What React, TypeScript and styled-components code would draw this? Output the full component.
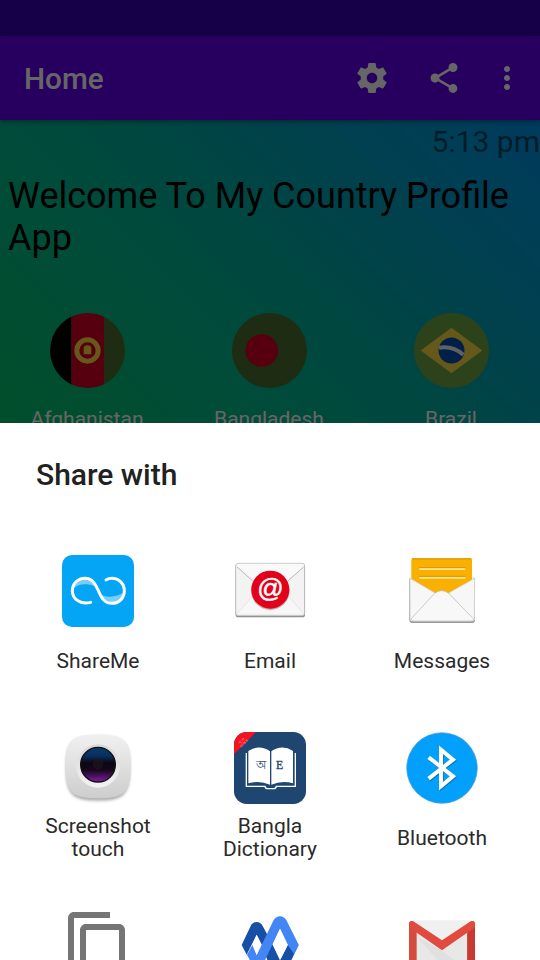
import React from "react";
import styled, { createGlobalStyle } from "styled-components";

const GlobalStyle = createGlobalStyle`
  * { box-sizing: border-box; }
  body { margin: 0; background: #fff; font-family: Roboto, sans-serif; }
  svg { display: block; }
`;

const Screen = styled.div`
  position: relative;
  width: 540px;
  height: 960px;
  overflow: hidden;
  display: flex;
  flex-direction: column;
`;

const StatusBar = styled.div`
  flex: none;
  height: 36px;
  background: #3700b3;
`;

const AppBar = styled.header`
  flex: none;
  position: relative;
  display: flex;
  align-items: center;
  height: 84px;
  padding: 0 15px 0 24px;
  background: #6200ee;
  color: #fff;
  box-shadow: 0 1px 5px rgba(0, 0, 0, 0.45);
`;

const AppTitle = styled.h1`
  flex: 1;
  margin: 0;
  padding-top: 2px;
  font-size: 29.7px;
  font-weight: 500;
  line-height: 36px;
`;

const Actions = styled.div`
  display: flex;
  align-items: center;
  gap: 36px;
`;

const Action = styled.svg<{ $last?: boolean }>`
  width: 36px;
  height: 36px;
  margin-left: ${(p) => (p.$last ? "-9px" : "0")};
  fill: #fff;
`;

const HomePage = styled.main`
  flex: 1;
  display: flex;
  flex-direction: column;
  background: linear-gradient(
    45deg,
    #00c853 0%,
    #00c469 39%,
    #00bc91 60%,
    #00b2a0 70%,
    #00a6b7 79%,
    #009ed0 89%,
    #0092e8 100%
  );
`;

const Clock = styled.div`
  height: 44px;
  line-height: 44px;
  text-align: right;
  font-size: 30px;
  color: rgba(0, 0, 0, 0.54);
`;

const Welcome = styled.h2`
  margin: 11px 0 0 8px;
  font-size: 36px;
  font-weight: 400;
  line-height: 42px;
  color: #000;
`;

const Countries = styled.div`
  display: grid;
  grid-template-columns: repeat(3, 182px);
  margin: 54px 0 0 -4px;
`;

const Country = styled.div`
  display: flex;
  flex-direction: column;
  align-items: center;
  gap: 19px;
  font-size: 21px;
  line-height: 25px;
  color: #fff;
`;

const Flag = styled.svg`
  width: 75px;
  height: 75px;
`;

const Overlay = styled.div`
  position: absolute;
  inset: 0;
  display: flex;
  flex-direction: column;
  justify-content: flex-end;
  background: rgba(0, 0, 0, 0.6);
`;

const Sheet = styled.section`
  height: 537px;
  overflow: hidden;
  background: #fff;
`;

const SheetTitle = styled.h3`
  margin: 0;
  padding: 34px 36px 0;
  height: 132px;
  font-size: 30px;
  line-height: 36px;
  font-weight: 500;
  color: #212121;
`;

const TargetGrid = styled.div`
  display: grid;
  grid-template-columns: repeat(3, 172px);
  grid-auto-rows: 177px;
  padding: 0 12px;
`;

const Target = styled.div`
  display: flex;
  flex-direction: column;
  align-items: center;
  gap: 8px;
`;

const TargetIcon = styled.svg`
  flex: none;
  width: 72px;
  height: 72px;
`;

const TargetLabel = styled.div`
  display: flex;
  align-items: center;
  height: 52px;
  width: 130px;
  justify-content: center;
  text-align: center;
  font-size: 21px;
  line-height: 23px;
  color: #2a2a2a;
`;

const AfghanistanFlag = () => (
  <Flag viewBox="60 39 225 225">
    <clipPath id="afg"><circle cx="172.5" cy="151.5" r="112.5" /></clipPath>
    <g clipPath="url(#afg)">
      <rect x="60" y="39" width="65" height="225" fill="#000" />
      <rect x="124" y="39" width="98" height="225" fill="#d80027" />
      <rect x="222" y="39" width="64" height="225" fill="#496e2d" />
    </g>
    <circle cx="172.5" cy="151.5" r="32" fill="none" stroke="#ffda44" strokeWidth="15" />
    <path d="M161 163v-17q0-10 11.5-10t11.5 10v17z" fill="#ffda44" />
  </Flag>
);

const BangladeshFlag = () => (
  <Flag viewBox="66 39 225 225">
    <circle cx="178.5" cy="151.5" r="112.5" fill="#496e2d" />
    <circle cx="155" cy="151.5" r="49" fill="#d80027" />
  </Flag>
);

const BrazilFlag = () => (
  <Flag viewBox="72 39 225 225">
    <circle cx="184.5" cy="151.5" r="112.5" fill="#6da544" />
    <path d="M184.5 83 277 151.5 184.5 220 92 151.5z" fill="#ffda44" />
    <circle cx="184.5" cy="151.5" r="39" fill="#0052b4" />
    <path d="M147 143q41-7 73 21" fill="none" stroke="#f0f0f0" strokeWidth="12" />
  </Flag>
);

const ShareMeIcon = () => (
  <TargetIcon viewBox="96 45 216 216">
    <rect x="96" y="45" width="216" height="216" rx="30" fill="#03a5f4" />
    <path d="M129 148C142 133 166 128 196 139C187 120 178 116 164 116C146 116 131 130 129 148z" fill="#7accf9" />
    <path d="M209 160C222 174 252 174 281 158C277 178 263 190 246 190C226 190 216 176 209 160z" fill="#7accf9" />
    <path
      d="M182 187C153 195 127 178 127 152C127 130 144 115 165 115C187 115 196 132 205 152C214 173 222 190 246 190C268 190 283 173 283 152C283 131 267 115 245 115C238 115 233 117 228 120"
      fill="none" stroke="#fff" strokeWidth="9" strokeLinecap="round" />
  </TargetIcon>
);

const EmailIcon = () => (
  <TargetIcon viewBox="72 45 216 216">
    <rect x="77" y="72" width="208" height="160" rx="8" fill="#8d8d8d" />
    <rect x="77" y="70" width="207" height="157" rx="8" fill="#f3f3f3" stroke="#b5b5b5" strokeWidth="2.5" />
    <path d="M80 222 145 150h74l63 72q-2 3-6 3H86q-4 0-6-3z" fill="#f7f7f7" stroke="#dcdcdc" strokeWidth="2" />
    <path d="M79 76 160 149q21 14 42 0L283 76q-2-5-8-5H87q-6 0-8 5z" fill="#f9f9f9" />
    <path d="M81 81 160 151M281 81l-79 70" stroke="#b9b9b9" strokeWidth="3" />
    <circle cx="181" cy="152" r="58" fill="#bdb3b3" />
    <circle cx="181" cy="149" r="57" fill="#e2001a" />
    <text x="181" y="170" textAnchor="middle" fontFamily="Liberation Sans, sans-serif" fontSize="78" fill="#fff" stroke="#fff" strokeWidth="1.5">@</text>
  </TargetIcon>
);

const MessagesIcon = () => (
  <TargetIcon viewBox="78 45 216 216">
    <path d="M88 119q0-8 8-5H278q8-3 7 5V240q0 9-9 9H97q-9 0-9-9z" fill="#999" />
    <rect x="90" y="114" width="193" height="130" rx="6" fill="#f1f1f1" />
    <path d="M94 60q0-5 5-5H271q5 0 5 5V125L212 162H158L94 125z" fill="#f9b000" />
    <path d="M96 56.5H274" stroke="#cf9300" strokeWidth="3" />
    <path d="M118 87H256M118 113H256" stroke="#ffe58f" strokeWidth="6" />
    <path d="M118 83H256M118 109H256" stroke="#dc9700" strokeWidth="3" />
    <path d="M90 115 165 159 91 240zM284 115 206 159 283 240z" fill="#f7f7f7" stroke="#cfcfcf" strokeWidth="2" />
    <path d="M93 237 163 161q22-18 44 0L281 237q-2 6-8 6H101q-6 0-8-6z" fill="#f8f8f8" stroke="#c9c9c9" strokeWidth="2.5" />
  </TargetIcon>
);

const ScreenshotIcon = () => (
  <TargetIcon viewBox="96 36 216 216">
    <defs>
      <linearGradient id="body" x1="0" y1="0" x2="0" y2="1">
        <stop offset="0" stopColor="#f1f1f1" /><stop offset="1" stopColor="#cdcdcd" />
      </linearGradient>
      <linearGradient id="rim" x1="0" y1="0" x2="0" y2="1">
        <stop offset="0" stopColor="#d8d8d8" /><stop offset="1" stopColor="#f2f2f2" />
      </linearGradient>
      <linearGradient id="lens" x1="0" y1="0" x2="0" y2="1">
        <stop offset="0" stopColor="#063c70" /><stop offset=".25" stopColor="#082f5d" />
        <stop offset=".45" stopColor="#0b0711" /><stop offset=".65" stopColor="#150719" />
        <stop offset=".82" stopColor="#46105f" /><stop offset="1" stopColor="#8b1ba5" />
      </linearGradient>
      <filter id="soft"><feGaussianBlur stdDeviation="4" /></filter>
    </defs>
    <path d="M204 50C280 50 300 62 300 144S280 242 204 242 108 226 108 144 128 50 204 50z" fill="#aaa" filter="url(#soft)" />
    <path d="M204 43C284 43 302 61 302 139S284 235 204 235 106 217 106 139 124 43 204 43z" fill="url(#body)" />
    <circle cx="204" cy="138" r="65" fill="url(#rim)" />
    <circle cx="204" cy="134" r="52" fill="url(#lens)" stroke="#111" strokeWidth="4" />
    <circle cx="204" cy="133" r="16" fill="#1d1620" opacity=".7" />
  </TargetIcon>
);

const DictionaryIcon = () => (
  <TargetIcon viewBox="72 36 216 216">
    <clipPath id="tile"><rect x="72" y="36" width="216" height="216" rx="38" /></clipPath>
    <g clipPath="url(#tile)">
      <rect x="72" y="36" width="216" height="216" fill="#1e4670" />
      <path d="M72 36h66L72 103z" fill="#f5111d" />
    </g>
    <g transform="rotate(-45 98 66)" fill="#ffb9b9" fontFamily="Roboto, sans-serif" fontSize="10">
      <text x="98" y="64" textAnchor="middle">বাংলা</text>
      <text x="98" y="75" textAnchor="middle">অভিধান</text>
    </g>
    <path d="M109 99V199H165q1 7 8 7h18q7 0 8-7h57V99" fill="none" stroke="#fff" strokeWidth="4" />
    <path d="M115 93Q148 72 180 94V194Q148 180 115 190z" fill="#fff" />
    <path d="M184 94Q216 72 249 93V190Q216 180 184 194z" fill="#fff" />
    <text x="152" y="146" textAnchor="middle" fontFamily="Liberation Serif, serif" fontSize="36" fontWeight="400" fill="#1e4670">অ</text>
    <text x="209" y="146" textAnchor="middle" fontFamily="Liberation Serif, serif" fontSize="35" fill="#1e4670" stroke="#1e4670">E</text>
  </TargetIcon>
);

const BluetoothIcon = () => (
  <TargetIcon viewBox="78 36 216 216">
    <circle cx="186" cy="144" r="106" fill="#03a0fb" stroke="#5d9fc9" strokeWidth="2" />
    <path d="M146 112 219 169 183 199V89L219 119 146 176" transform="translate(2 3)" fill="none" stroke="#0874b5" strokeWidth="12" />
    <path d="M146 112 219 169 183 199V89L219 119 146 176" fill="none" stroke="#fff" strokeWidth="12" />
  </TargetIcon>
);

const CopyIcon = () => (
  <TargetIcon viewBox="0 0 24 24">
    <path fill="#757575" d="M16 1H4c-1.1 0-2 .9-2 2v14h2V3h12V1zm3 4H8c-1.1 0-2 .9-2 2v14c0 1.1.9 2 2 2h11c1.1 0 2-.9 2-2V7c0-1.1-.9-2-2-2zm0 16H8V7h11v14z" />
  </TargetIcon>
);

const RibbonIcon = () => (
  <TargetIcon viewBox="582 57 216 216">
    <path d="M605 165 632 108C639 92 661 92 668 108L725 214 695 240 650 134 620 194z" fill="#174ea6" />
    <path d="M776 164 740 240 718 215 744 164z" fill="#174ea6" />
    <path d="M637 165 650 134 666 165 650 196z" fill="#fff" />
    <path d="M621 194 637 165 650 196 700 92C708 74 732 74 740 92L776 164 762 192 743 164 720 116 661 240H645z" fill="#4285f4" />
    <path d="M698 164 720 116 743 164 720 211z" fill="#fff" />
  </TargetIcon>
);

const GmailIcon = () => (
  <TargetIcon viewBox="1098 57 216 216">
    <path d="M1117 91H1295V240H1117z" fill="#f0f0f0" />
    <path d="M1128 130 1206 180 1284 130V240H1128z" fill="#e8e8e8" />
    <path d="M1130 140 1206 182 1284 240H1220z" fill="#e0e0e0" />
    <path d="M1107 102Q1107 93 1117 93L1130 102V240H1107zM1305 102Q1305 93 1295 93L1282 102V240H1305z" fill="#d54b3d" />
    <path d="M1282 128 1305 110V240H1282z" fill="#c63a2f" />
    <path d="M1107 104Q1107 88 1122 95L1206 151 1290 95Q1305 88 1305 104 1305 111 1298 117L1206 181 1114 117Q1107 111 1107 104z" fill="#e04a3f" />
  </TargetIcon>
);

const countries = [
  { name: "Afghanistan", Icon: AfghanistanFlag },
  { name: "Bangladesh", Icon: BangladeshFlag },
  { name: "Brazil", Icon: BrazilFlag },
];

const targets = [
  { name: "ShareMe", Icon: ShareMeIcon },
  { name: "Email", Icon: EmailIcon },
  { name: "Messages", Icon: MessagesIcon },
  { name: "Screenshot touch", Icon: ScreenshotIcon },
  { name: "Bangla Dictionary", Icon: DictionaryIcon },
  { name: "Bluetooth", Icon: BluetoothIcon },
  { name: "", Icon: CopyIcon },
  { name: "", Icon: RibbonIcon },
  { name: "", Icon: GmailIcon },
];

export default function App() {
  return (
    <>
      <GlobalStyle />
      <Screen>
        <StatusBar />
        <AppBar>
          <AppTitle>Home</AppTitle>
          <Actions>
            <Action viewBox="0 0 24 24">
              <path d="M19.43 12.98c.04-.32.07-.64.07-.98s-.03-.66-.07-.98l2.11-1.65c.19-.15.24-.42.12-.64l-2-3.46c-.12-.22-.39-.3-.61-.22l-2.49 1c-.52-.4-1.08-.73-1.69-.98l-.38-2.65C14.46 2.18 14.25 2 14 2h-4c-.25 0-.46.18-.49.42l-.38 2.65c-.61.25-1.17.59-1.69.98l-2.49-1c-.23-.09-.49 0-.61.22l-2 3.46c-.13.22-.07.49.12.64l2.11 1.65c-.04.32-.07.65-.07.98s.03.66.07.98l-2.11 1.65c-.19.15-.24.42-.12.64l2 3.46c.12.22.39.3.61.22l2.49-1c.52.4 1.08.73 1.69.98l.38 2.65c.03.24.24.42.49.42h4c.25 0 .46-.18.49-.42l.38-2.65c.61-.25 1.17-.59 1.69-.98l2.49 1c.23.09.49 0 .61-.22l2-3.46c.12-.22.07-.49-.12-.64l-2.11-1.65zM12 15.5c-1.93 0-3.5-1.57-3.5-3.5s1.57-3.5 3.5-3.5 3.5 1.57 3.5 3.5-1.57 3.5-3.5 3.5z" />
            </Action>
            <Action viewBox="0 0 24 24">
              <path d="M18 16.08c-.76 0-1.44.3-1.96.77L8.91 12.7c.05-.23.09-.46.09-.7s-.04-.47-.09-.7l7.05-4.11c.54.5 1.25.81 2.04.81 1.66 0 3-1.34 3-3s-1.34-3-3-3-3 1.34-3 3c0 .24.04.47.09.7L8.04 9.81C7.5 9.31 6.79 9 6 9c-1.66 0-3 1.34-3 3s1.34 3 3 3c.79 0 1.5-.31 2.04-.81l7.12 4.16c-.05.21-.08.43-.08.65 0 1.61 1.31 2.92 2.92 2.92s2.92-1.31 2.92-2.92-1.31-2.92-2.92-2.92z" />
            </Action>
            <Action viewBox="0 0 24 24" $last>
              <path d="M12 8c1.1 0 2-.9 2-2s-.9-2-2-2-2 .9-2 2 .9 2 2 2zm0 2c-1.1 0-2 .9-2 2s.9 2 2 2 2-.9 2-2-.9-2-2-2zm0 6c-1.1 0-2 .9-2 2s.9 2 2 2 2-.9 2-2-.9-2-2-2z" />
            </Action>
          </Actions>
        </AppBar>
        <HomePage>
          <Clock>5:13 pm</Clock>
          <Welcome>Welcome To My Country Profile App</Welcome>
          <Countries>
            {countries.map(({ name, Icon }) => (
              <Country key={name}>
                <Icon />
                {name}
              </Country>
            ))}
          </Countries>
        </HomePage>
        <Overlay>
          <Sheet>
            <SheetTitle>Share with</SheetTitle>
            <TargetGrid>
              {targets.map(({ name, Icon }, i) => (
                <Target key={i}>
                  <Icon />
                  <TargetLabel>{name}</TargetLabel>
                </Target>
              ))}
            </TargetGrid>
          </Sheet>
        </Overlay>
      </Screen>
    </>
  );
}
